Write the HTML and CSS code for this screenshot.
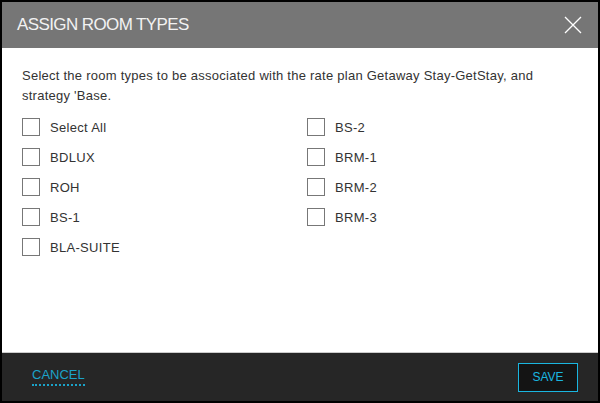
FILE: index.html
```html
<!DOCTYPE html>
<html>
<head>
<meta charset="utf-8">
<link rel="stylesheet" href="styles.css">
</head>
<body>
<div class="dialog">
  <div class="header">
    <h1 class="title">ASSIGN ROOM TYPES</h1>
    <button class="close" aria-label="Close">
      <svg width="18" height="18" viewBox="0 0 18 18"><path d="M1 1L17 17M17 1L1 17" stroke="#fff" stroke-width="1.3" fill="none"/></svg>
    </button>
  </div>
  <div class="content">
    <p class="intro">Select the room types to be associated with the rate plan Getaway Stay-GetStay, and strategy 'Base.</p>
    <div class="options">
      <div class="col">
        <label class="opt"><span class="box"></span>Select All</label>
        <label class="opt"><span class="box"></span>BDLUX</label>
        <label class="opt"><span class="box"></span>ROH</label>
        <label class="opt"><span class="box"></span>BS-1</label>
        <label class="opt"><span class="box"></span>BLA-SUITE</label>
      </div>
      <div class="col">
        <label class="opt"><span class="box"></span>BS-2</label>
        <label class="opt"><span class="box"></span>BRM-1</label>
        <label class="opt"><span class="box"></span>BRM-2</label>
        <label class="opt"><span class="box"></span>BRM-3</label>
      </div>
    </div>
  </div>
  <div class="footer">
    <a class="cancel">CANCEL</a>
    <button class="save">SAVE</button>
  </div>
</div>
</body>
</html>
```
FILE: styles.css
```css
html, body { margin: 0; padding: 0; background: #000; }
body { font-family: "Liberation Sans", Arial, sans-serif; }
.dialog {
  width: 600px; height: 403px; box-sizing: border-box;
  border: 2px solid #000; background: #fff;
  display: flex; flex-direction: column;
}
.header {
  height: 46px; background: #767676;
  display: flex; align-items: center; justify-content: space-between;
  padding: 0 16px 0 15px;
}
.title {
  margin: 0; font-size: 17px; font-weight: normal; color: #f2f2f2;
  letter-spacing: -0.6px;
}
.close { background: none; border: 0; padding: 0; width: 18px; height: 18px; display: block; }
.close svg { display: block; }
.content { flex: 1; padding: 18px 20px 0 20px; }
.intro {
  margin: 0; font-size: 13px; line-height: 20px; color: #333; letter-spacing: 0.25px;
}
.options { display: grid; grid-template-columns: 285px 1fr; margin-top: 6px; }
.col { display: flex; flex-direction: column; }
.opt {
  height: 30px; display: flex; align-items: center;
  font-size: 13px; color: #333; letter-spacing: 0.3px;
}
.box {
  width: 16px; height: 16px; border: 1px solid #777; background: #fff;
  margin-right: 10px; margin-left: 0;
}
.footer {
  height: 48px; background: #262626; border-top: 1px solid #ccc;
  display: flex; align-items: center; justify-content: space-between;
  padding: 0 20px 0 30px;
}
.cancel {
  font-size: 13px; color: #1ba3c9; letter-spacing: 0;
  border-bottom: 2px dotted #1ba3c9; padding-bottom: 2px; line-height: 14px;
}
.save {
  width: 60px; height: 29px; box-sizing: border-box;
  border: 1px solid #1ab6e0; background: #141414; color: #1ab6e0;
  font-family: "Liberation Sans", Arial, sans-serif; font-size: 12px; padding: 0;
}
```
